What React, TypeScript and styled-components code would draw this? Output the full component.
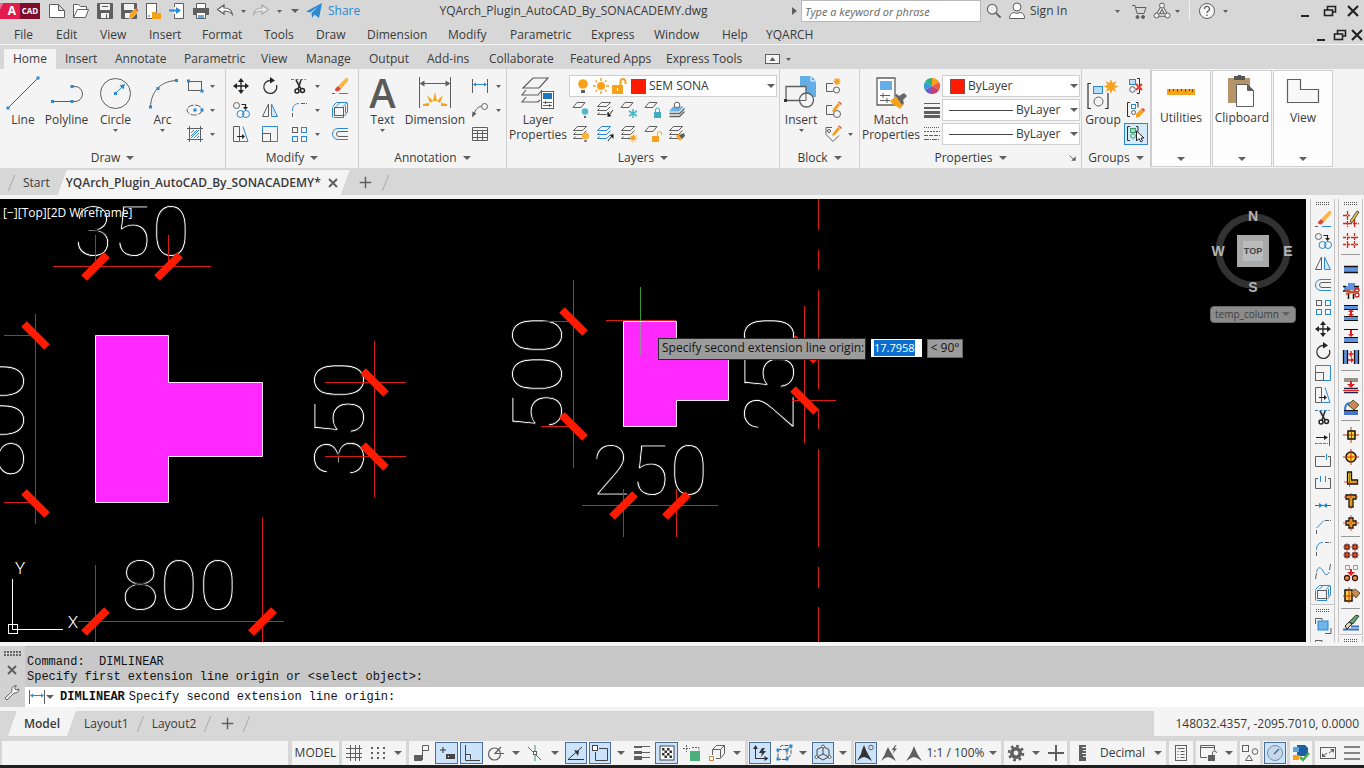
import React from 'react';
import styled, { createGlobalStyle, css } from 'styled-components';

const C = {
  chrome: '#d7d7d7',
  light: '#f4f4f4',
  text: '#3a3a3a',
  gray: '#5f5f5f',
  blue: '#2b88d2',
  orange: '#f7a21b',
  red: '#ff1a00',
  magenta: '#ff28ff',
  line: '#cfcfcf',
};

const Global = createGlobalStyle`
  *, *::before, *::after { box-sizing: border-box; }
  body { margin: 0; background: ${C.chrome}; }
  body, button, input, select {
    font-family: "Open Sans", "Noto Sans", sans-serif;
    font-size: 12px;
    line-height: 16px;
    color: ${C.text};
  }
  button { border: 0; padding: 0; background: none; }
  svg { display: block; flex: none; }
`;

/* ---------- icons ---------- */

const G = C.gray;
const B = C.blue;
const O = C.orange;

const dot = (x: number, y: number) => <rect x={x - 1.5} y={y - 1.5} width="3" height="3" fill={B} stroke="none" />;
const sheet = (x: number, y: number, fill = 'none', stroke = G) => (
  <path d={`M${x + 4} ${y}h8l-4 5h-8z`} fill={fill} stroke={stroke} />
);
const stack = (fill = 'none', stroke = G) => (
  <>
    <path d="M5.500 1.500h9l-4 4h-9z" fill={fill} stroke={stroke} />
    <path d="M3.500 7.500l-2 2h9l4-4" stroke={stroke} />
    <path d="M3.500 11.500l-2 2h9l3-3" stroke={stroke} />
  </>
);
const pencil = (
  <>
    <path d="M9 8L14 2l2 2-5 6-3 1z" fill={O} stroke="none" />
    <path d="M14 1l3 3 1-1-2.500-2.500z" fill="#e0523f" stroke="none" />
  </>
);

const icons: Record<string, React.ReactNode> = {
  rect: (<><rect x="2.5" y="4.5" width="13" height="9" />{dot(2.5, 4)}{dot(16, 14)}</>),
  ellipse: (<><ellipse cx="8.500" cy="9" rx="7.500" ry="5" strokeDasharray="6 1.500" />{dot(9, 9)}{dot(16, 9)}</>),
  hatch: (
    <>
      <path d="M3.500 1v16M14.500 1v16M1 3.500h16M1 14.500h16" />
      <path d="M5 8l3-3M5 11l6-6M5 13l8-8M8 13l5-5M11 13l2-2" stroke={B} />
    </>
  ),
  move: (
    <>
      <path d="M9 3v12M3 9h12" stroke="#222" strokeWidth="1.300" />
      <path d="M9 1l3 4H6zM9 17l3-4H6zM1 9l4-3v6zM17 9l-4-3v6z" fill="#222" stroke="none" />
    </>
  ),
  rotate: (<><path d="M10 3.500H8.500A6.500 6.500 0 1 0 15.500 8" stroke="#333" strokeWidth="1.300" /><path d="M9 0l5 3.500-5 3z" fill="#222" stroke="none" /></>),
  trim: (
    <>
      <path d="M1 2.500h15" stroke={B} strokeDasharray="3 1.500" />
      <path d="M6 3l5 9M11 3l-3 9" stroke="#333" strokeWidth="1.600" />
      <circle cx="7" cy="14" r="2" stroke="#222" strokeWidth="1.500" />
      <circle cx="12.500" cy="13.500" r="2" stroke="#222" strokeWidth="1.500" />
    </>
  ),
  erase: (
    <>
      <path d="M7 9l8-8h2v3l-7 8z" fill="#f9b545" stroke="none" />
      <path d="M7 9l3 3-3 2.500-2.500-.5-.5-2z" fill="#d9483a" stroke="none" />
      <path d="M1 16.500h3" stroke={G} /><path d="M8 16.500h9" stroke={B} />
    </>
  ),
  copy: (
    <>
      <circle cx="4.500" cy="4.500" r="3" />
      <path d="M9.500 3.500h4v3" stroke="#222" strokeWidth="1.200" /><path d="M11 6h5l-2.500 3z" fill="#222" stroke="none" />
      <circle cx="8.500" cy="13" r="3.500" stroke={B} /><circle cx="14" cy="13" r="3.500" stroke={B} />
    </>
  ),
  mirror: (<><path d="M7.500 3v12.500h-6z" /><path d="M10.500 3v12.500h6z" stroke={B} fill="#d5e7f7" /></>),
  fillet: (<><path d="M2.500 10C2.500 5 5 2.500 9 2.500" stroke={B} /><path d="M11 2.500h6M2.500 12v5" strokeDasharray="4 1" /></>),
  chamfer: (<><path d="M2.500 10L10 2.500" stroke={B} /><path d="M11 2.500h6M2.500 12v5" strokeDasharray="4 1" /></>),
  box: (
    <>
      <path d="M1.500 16.500v-10M12.500 6.500v10M3 16.500h10" stroke={B} /><rect x="3.500" y="6.500" width="9" height="8" />
      <path d="M1.500 5.500l4-4h5M5 5.500l4-4h7l-4 4M16.500 2v9l-3 4M14.500 5v7" stroke={B} />
    </>
  ),
  stretch: (
    <>
      <path d="M1.500 1.500h6v15h-6z" /><path d="M11 1.500l5 15H8" stroke={B} />
      <path d="M5 11.500h6" stroke="#222" /><path d="M10 9l3 2.500-3 2.500z" fill="#222" stroke="none" />
    </>
  ),
  scale: (<><path d="M1.500 8V1.500h15v15H10" stroke={B} /><rect x="1.500" y="8.500" width="8" height="8" /></>),
  array: (
    <>
      <rect x="2.500" y="2.500" width="5" height="5" /><rect x="11.500" y="2.500" width="5" height="5" stroke={B} />
      <rect x="2.500" y="11.500" width="5" height="5" stroke={B} /><rect x="11.500" y="11.500" width="5" height="5" stroke={B} />
    </>
  ),
  offset: (<><path d="M17 3.500H7a5.500 5.500 0 0 0 0 11h10" stroke={B} /><path d="M17 6.500H8a2.500 2.500 0 0 0 0 5h9" /></>),
  extend: (<><path d="M2 7.500h9" stroke="#222" /><path d="M10 5l4 2.500-4 2.500z" fill="#222" stroke="none" /><path d="M15.500 3v13" /><path d="M1 13.500h13" stroke={B} strokeDasharray="3 1" /></>),
  breakAt: (<><path d="M11 4.500H1.500v10h15v-10H14" /><path d="M12.500 2v6" stroke={B} /></>),
  breakIt: (<><path d="M4 4.500H1.500v10h15v-10H14" /><path d="M6.500 2v6M11.500 2v6" stroke={B} /></>),
  join: (<><path d="M1 9.500h16" /><path d="M5 7l4 2.500-4 2.500zM13 7L9 9.500l4 2.500z" fill={B} stroke="none" /></>),
  blend: (<><path d="M1.500 17l1-6M15.500 8l1-6" /><path d="M2.500 10C4 4 7 5 9 9s4 5 6.500 1" stroke={B} /></>),
  order: (<><path d="M1.500 7V1.500H8v2" /><path d="M11 16.500h6V11" /><rect x="4" y="4" width="10" height="9" fill="#6db3ec" stroke={B} /></>),
  dim: (<><path d="M1.500 2v14M16.500 2v14" /><path d="M3 7.500h12" stroke={B} /><path d="M2 7.500l3-2v4zM16 7.500l-3-2v4z" fill={B} stroke="none" /></>),
  leader: (<><circle cx="13.500" cy="5.500" r="3" /><path d="M10.500 5.500C7 5.500 5 8 2 14" /><path d="M1 16.500l.5-6 4 2z" fill={G} stroke="none" /></>),
  table: (<path d="M1.500 2.500h15v13h-15zM1.500 5.500h15M1.500 8.500h15M1.500 12.500h15M6.500 5.500v10M11.500 5.500v10" />),
  layOff: (<>{sheet(1, 1.5)}<circle cx="13" cy="10.500" r="3.300" fill="#57b7c6" stroke="none" /><path d="M12 15h2v2h-2z" fill={G} stroke="none" /></>),
  layIso: (<>{stack()}<path d="M17 9l-4 5" stroke="#222" /><path d="M11.500 16v-5l4 4z" fill="#222" stroke="none" /></>),
  layFreeze: (<>{sheet(1, 1.5)}<path d="M13 8v9M9 10l8 5M17 10l-8 5" stroke="#46b4c7" strokeWidth="1.500" /></>),
  layLock: (<>{sheet(1, 1.5)}<rect x="10" y="11" width="7" height="6" fill="#46aabf" stroke="none" /><path d="M11.500 11V9a2 2 0 0 1 4 0v2" stroke="#46aabf" /></>),
  layCur: (<><path d="M5 5.500h11l-5 5H1z" fill="#6bb0e6" stroke="none" /><path d="M1.500 12.500h10l5-5M1.500 15.500h10l5-5" strokeWidth="1.300" /><circle cx="9" cy="4" r="2.800" fill="#fff" /></>),
  layOn: (<>{stack()}<circle cx="13.500" cy="11" r="3.600" fill="#fbb438" stroke="none" /><path d="M12.500 15h2v2h-2z" fill={G} stroke="none" /></>),
  layUniso: (<>{stack('none', B)}<path d="M12 16l4-5" stroke="#222" /><path d="M17.500 9v5l-4-4z" fill="#222" stroke="none" /></>),
  layThaw: (<>{stack()}<circle cx="13" cy="13" r="2.500" fill={O} stroke="none" /><circle cx="13" cy="13" r="4" stroke={O} strokeDasharray="1.200 1.900" /></>),
  layUnlock: (<>{sheet(1, 1.5)}<rect x="8" y="11" width="7" height="6" fill={O} stroke="none" /><path d="M13.500 11V8.500a2 2 0 0 1 4 0V10" stroke={O} /></>),
  layMatch: (<>{stack()}<path d="M8 11l3-2 3 4-2 3c-1-2-3-3-4-5z" fill={O} stroke="none" /><path d="M11 10l5-2 1 3-3 3z" fill={G} stroke="none" /></>),
  blkNew: (<><path d="M9 6.500H2.500v8H9" /><circle cx="12.500" cy="13" r="3" /><path d="M13 1v7M9.500 4.500h7M10.500 2l5 5M15.500 2l-5 5" stroke={O} strokeWidth="1.500" /></>),
  blkEdit: (<><path d="M8 4.500H2.500v9H9" /><circle cx="13" cy="13" r="3.500" />{pencil}</>),
  blkAttr: (<><path d="M8 2.500H2v7l7 7 6-6" /><circle cx="5" cy="6" r="1.500" />{pencil}</>),
  lw: (<path d="M1 2h16v1H1zM1 6h16v2H1zM1 10h16v3H1zM1 14h16v3H1z" fill={G} stroke="none" />),
  lt: (<><path d="M1 2.500h16" strokeDasharray="1 1" /><path d="M1 6.500h16" strokeDasharray="2 1" /><path d="M1 10.500h16" strokeDasharray="4 1" /><path d="M1 14.500h16" strokeDasharray="5 1 1 1" /></>),
  ungroup: (<><rect x="2.500" y="2.500" width="6" height="5" stroke={B} fill="#bfe0f7" /><circle cx="5.500" cy="12.500" r="2.800" /><path d="M10 1.500h2.500v15H10" stroke="#333" /><path d="M9 7l6 6M15 7l-6 6" stroke="#e23c2e" strokeWidth="1.800" /></>),
  grpEdit: (<><path d="M3 1.500H.5v14H3M9 1.500h2v5" stroke="#333" /><rect x="4.500" y="3.500" width="4" height="4" stroke={B} /><circle cx="6.500" cy="11.500" r="2" /><path d="M9 13l5-5 3 3-5 5-3 .5z" fill={O} stroke="none" /><path d="M14 8l2-1 2 2-1 2z" fill="#e0523f" stroke="none" /></>),
  grpSel: (<><path d="M3 1.500H.5v14H3M9 1.500h2v5" stroke="#333" /><rect x="3.500" y="3.500" width="5" height="4" stroke="#3a9a68" fill="#9fd8b4" /><circle cx="6" cy="11" r="2.300" stroke="#3a9a68" /><path d="M9.500 6v10l2.500-2.500 2 3.500 1.500-1-1.500-3h3z" fill="#fff" stroke="#222" /></>),
  // status bar
  grid: (<path d="M5.500 1v16M10.500 1v16M14.500 1v16M1 4.500h16M1 9.500h16M1 13.500h16" />),
  snap: (<path d="M2 3h2v2H2zM8 3h2v2H8zM14 3h2v2h-2zM2 8h2v2H2zM8 8h2v2H8zM14 8h2v2h-2zM2 13h2v2H2zM8 13h2v2H8zM14 13h2v2h-2z" fill={G} stroke="none" />),
  infer: (<><rect x="1" y="11" width="8" height="6" fill={G} stroke="none" /><path d="M9.500 16V1.500h6v5h-6" /></>),
  dyn: (<><path d="M5 3v6M2 6h6" stroke="#333" /><rect x="8" y="10" width="9" height="5" fill="#444" stroke="none" /><path d="M10 12.500h1" stroke="#fff" /></>),
  ortho: (<path d="M2.500 1v15.500H17M2.500 10.500h5v5" stroke="#444" />),
  polar: (<><circle cx="7.500" cy="10" r="6" strokeWidth="1.200" /><path d="M7.500 9.500H17M7.500 10L14 3" strokeWidth="1.200" /></>),
  iso: (<><path d="M2 3l13 13" stroke="#d33" /><path d="M9 1v16" stroke="#3a9a68" /><rect x="7.500" y="7.500" width="3" height="3" fill="#fff" /></>),
  track: (<><path d="M1 15.500h16M1 15.500L15 3" stroke="#333" /><path d="M7 6l5 1-1 5z" fill="#333" stroke="none" /></>),
  osnap: (<><path d="M8 4.500h8.500v12h-12V8" stroke="#444" /><rect x="1.500" y="1.500" width="5" height="5" stroke="#444" fill="#fff" /></>),
  weight: (<path d="M1 2h8v2H1zM9 2h8v1H9zM1 7h8v3H1zM9 8h8v1H9zM1 12h8v4H1zM9 13h8v1H9z" fill={G} stroke="none" />),
  trans: (<><rect x="2" y="2" width="14" height="14" fill="#fff" stroke="#444" /><path d="M4 4h2.500v2.500H4zM9 4h2.500v2.500H9zM6.500 6.500H9V9H6.500zM11.500 6.500H14V9h-2.500zM4 9h2.500v2.500H4zM9 9h2.500v2.500H9zM6.500 11.500H9V14H6.500zM11.500 11.500H14V14h-2.500z" fill="#333" stroke="none" /></>),
  cycle: (<><path d="M3.500 1v7M0 4.500h7M9 3.500h7v3" strokeDasharray="2 1" /><rect x="7" y="7" width="10" height="10" fill="#4bb07a" stroke="none" /></>),
  osnap3: (<><path d="M4.500 11V5.500l4-4h8v8l-4 5H8M4.500 5.500h8v8M12.500 5.500l4-4" /><rect x="1.500" y="12.500" width="4" height="4" stroke="#e08a3c" fill="#fff" /></>),
  ucs: (<><path d="M4.500 14V4M4 14.500h10" stroke="#333" /><path d="M4.500 1l2.500 4H2zM17.500 14.500l-4-2.500v5zM11 4l-3 5h3l-1 4 5-6h-3l2-3z" fill="#333" stroke="none" /></>),
  filter: (<><path d="M3 5.500h9v10H3zM12 5.500l4-4v9l-4 5M5 3l2-1.500h8" strokeDasharray="4 1" />{dot(3, 6)}{dot(12, 6)}{dot(3, 15)}{dot(12, 15)}{dot(16, 2)}</>),
  gizmo: (<><path d="M9 2.500l6 3v7l-6 3.500-6-3.500v-7zM9 3v7l-6 3M9 10l6 3" stroke="#444" /><circle cx="9" cy="2.500" r="1.500" fill="#fff" /><circle cx="2.500" cy="13" r="1.500" fill="#fff" /><circle cx="15.500" cy="13" r="1.500" fill="#fff" /></>),
  annVis: (<><path d="M7 1l2 5 2 4 4 7-5-3-3-1-3 1-4 3 4-7 1-4z" fill="#333" stroke="none" /><circle cx="14" cy="3.500" r="2.300" stroke={G} /></>),
  annAuto: (<><path d="M7 3l2 4 2 3 4 7-5-3-3-1-3 1-4 3 4-7 1-3z" fill={G} stroke="none" /><path d="M14.500 1l-4 5h2.500l-1.500 4L16 4.500h-2.500L15.500 1z" fill={G} stroke="none" /></>),
  ann: (<path d="M9 2l2 5 2 4 4 6-5-3-3-1-3 1-5 3 4-6 2-4z" fill={G} stroke="none" />),
  gear: (<><circle cx="9" cy="9" r="4.200" strokeWidth="3.600" /><circle cx="9" cy="9" r="7" strokeWidth="2.600" strokeDasharray="2.700 2.800" /></>),
  plus: (<path d="M9 1v16M1 9h16" strokeWidth="2" />),
  ruler: (<><path d="M5 1h7v16H5z" fill={G} stroke="none" /><path d="M8 3.500h4M9 6.500h3M8 9.500h4M9 12.500h3" stroke="#eee" /></>),
  quick: (<><rect x="3.500" y="1.500" width="11" height="15" /><path d="M5.500 4.500h7M8.500 7.500h4M8.500 10.500h4M8.500 13.500h4M5.500 7.500h1M5.500 10.500h1M5.500 13.500h1" /></>),
  lockUi: (<><path d="M8 13.500H1.500v-12h14v5" /><path d="M1.500 3.500h14" /><rect x="9" y="11" width="7" height="6" fill={G} stroke="none" /><path d="M13.500 11V9a2 2 0 0 1 4 0" /></>),
  isolate: (<><rect x="1.500" y="1.500" width="6" height="6" /><circle cx="14" cy="7.500" r="2.800" /><path d="M8 11l3.500 5.500h-7z" /></>),
  perf: (<><circle cx="9" cy="9" r="7.500" fill="#c5d9ea" stroke="#7690a8" /><path d="M8 10l5-5" stroke="#4a6c8a" strokeWidth="1.500" /></>),
  trusted: (<><path d="M5 1h8l3 3v8H5z" fill="#1f5f9e" stroke="none" /><path d="M1 11h6v5H1z" fill={O} stroke="none" /><path d="M1 3h6v5H1z" fill="#58a2dd" stroke="none" /><path d="M8 13l3 3 6-7" stroke="#4caf50" strokeWidth="2.500" /></>),
  clean: (<><rect x="1.500" y="3.500" width="15" height="11" /><path d="M10 9l4-3M4 12l4-3" /><path d="M11 5h4v4zM3 9v4h4z" fill={G} stroke="none" /></>),
  menu: (<path d="M1 3h16M1 9h16M1 15h16" strokeWidth="1.600" />),
  wrench: (<path d="M2 15L9 8.500C8 5 10 2.500 13.500 2.500L11.500 5l1.500 2 3-1c0 3-2.500 4.500-5 4L4 17z" fill="#f4f4f4" />),
  close: (<path d="M5 5l8 8M13 5l-8 8" strokeWidth="2" />),
  // quick access bar
  fileNew: (<path d="M1.500 2.500h9l6 6v7h-15zM10.500 2.500v6h6" fill="#fff" />),
  fileOpen: (<path d="M1.500 15.500v-13h5l2 2h6v3M1.500 15.500l4-8h11l-3 8z" fill="#fff" />),
  save: (<><path d="M1.500 1.500h15v15h-15z" fill={G} /><path d="M4 2h10v6H4zM5 11h8v5H5z" fill="#f1f1f1" stroke="none" /><path d="M6 4.500h6M10.500 12v4" /></>),
  saveAs: (<><path d="M1.500 1.500h15v15h-15z" fill={G} /><path d="M4 2h10v6H4zM5 11h5v5H5z" fill="#f1f1f1" stroke="none" /><path d="M9 13l6-6 3 3-6 6-3 .5z" fill={O} stroke="#fff" strokeWidth=".5" /><path d="M15 7l1.500-1 2 2-.5 2z" fill="#e0523f" stroke="none" /></>),
  mobileOpen: (<><rect x="2.500" y="1.500" width="10" height="15" fill="#fff" /><path d="M4 14h2" /><path d="M8 10h4l1 1h4v6H8z" fill={O} stroke="none" /></>),
  mobileSave: (<><path d="M6.500 5V1.500h9v15h-9V12" fill="#fff" /><path d="M1 8.500h8" stroke={B} strokeWidth="2" /><path d="M8 5l5 3.500L8 12z" fill={B} stroke="none" /></>),
  print: (<><path d="M4.500 6V1.500h9V6" fill="#fff" /><rect x="1" y="6" width="16" height="7" fill={G} stroke="none" /><path d="M4.500 10.500h9v6h-9z" fill="#fff" /><path d="M6 13h6v3H6z" fill="#62a9df" stroke="none" /></>),
  undo: (<path d="M1.500 7.500L8 3v3c5 0 8 2 8.500 6.500-2-2.500-5-3.500-8.500-3.500v3z" fill="#fff" strokeWidth="1.200" />),
  redo: (<path d="M16.500 7.500L10 3v3C5 6 2 8 1.500 12.500 3.500 10 6.500 9 10 9v3z" fill="#e8e8e8" stroke="#aaa" strokeWidth="1.200" />),
  plane: (<path d="M1 9.500L17 1l-3 15-4.500-3.500L7 16l-.5-5L14 4l-9 6.500z" fill={B} stroke="none" />),
  search: (<><circle cx="7" cy="7" r="5.500" fill="#eee" strokeWidth="1.200" /><path d="M11 11l5.500 5.500" strokeWidth="2" /></>),
  user: (<><circle cx="9" cy="5" r="4" fill="#fff" /><path d="M1.500 16.500c0-4 2-5.500 4.500-6 2 1 4 1 6 0 3 .5 4.500 2 4.500 6z" fill="#fff" /></>),
  cart: (<><path d="M2 3.500h3l2 8h7l2-6H6" /><circle cx="7.500" cy="15" r="1.500" fill={G} /><circle cx="13" cy="15" r="1.500" fill={G} /></>),
  hub: (<><path d="M9 5l4.500 8h-9z" strokeWidth="3.500" /><path d="M9 5l4.500 8h-9z" stroke="#eee" strokeWidth="1.500" /><circle cx="9" cy="3.500" r="2.500" fill="#eee" /><circle cx="3.500" cy="13.500" r="2.500" fill="#eee" /><circle cx="14.500" cy="13.500" r="2.500" fill="#eee" /></>),
  min: (<path d="M4 14h8" stroke="#222" strokeWidth="2" />),
  restore: (<><rect x="3.500" y="8" width="8" height="5.500" stroke="#222" strokeWidth="1.600" /><path d="M6.500 8V4.500h8V10h-3" stroke="#222" strokeWidth="1.600" /></>),
  exit: (<path d="M4 4l10 10M14 4L4 14" stroke="#222" strokeWidth="2.200" />),
  minimizeRibbon: (<><rect x="1.500" y="4.500" width="14" height="9" fill="#f4f4f4" /><path d="M8.500 7l3 4h-6z" fill={G} stroke="none" /></>),
  bulb: (<><circle cx="9" cy="7" r="4.800" fill={O} stroke="none" /><path d="M7 13h4v3H7z" fill={G} stroke="none" /></>),
  sun: (<><circle cx="9" cy="9" r="4" fill={O} stroke="none" /><path d="M9 1v3M9 14v3M1 9h3M14 9h3M3.500 3.500L5 5M13 13l1.500 1.500M14.500 3.500L13 5M5 13l-1.500 1.500" stroke={O} strokeWidth="1.500" /></>),
  unlock: (<><rect x="2" y="8" width="11" height="9" fill={O} stroke="none" /><path d="M10.500 8V4.500a2.500 2.500 0 0 1 5 0V7" stroke={O} strokeWidth="2" /><path d="M7.500 11v3" stroke="#fff" /></>),
  wheel: (
    <g stroke="none">
      <path d="M9 9V1a8 8 0 0 1 7 4z" fill="#f7a21b" /><path d="M9 9l7-4a8 8 0 0 1 0 8z" fill="#ef5b3c" />
      <path d="M9 9l7 4a8 8 0 0 1-7 4z" fill="#c2416f" /><path d="M9 9v8a8 8 0 0 1-7-4z" fill="#7a55c7" />
      <path d="M9 9l-7 4a8 8 0 0 1 0-8z" fill="#2f9ad6" /><path d="M9 9L2 5a8 8 0 0 1 7-4z" fill="#2fb183" />
    </g>
  ),
  launcher: (<><path d="M5 6l5 5" /><path d="M12 7v5H7z" fill={G} stroke="none" /></>),
  // architecture plugin toolbar
  pAxis: (<><path d="M5.500 1v16M12.500 9v8M1 5.500h7M1 13.500h16" stroke="#cc2b1d" strokeWidth="1.300" strokeDasharray="4 1" /><path d="M8 11l7-10 2 1-7 11z" fill="#e8bf4a" stroke="#333" strokeWidth=".8" /></>),
  pGrid: (<path d="M5.500 1v16M12.500 1v16M1 5.500h16M1 12.500h16" stroke="#cc2b1d" strokeWidth="1.300" strokeDasharray="3 1" />),
  pWall: (<><rect x="2" y="7" width="14" height="5" fill="#5f93e0" stroke="none" /><path d="M2 6.500h14M2 12.500h14" stroke="#111" strokeWidth="1.500" /></>),
  pCut: (<><path d="M2 4h4V1h7v3h4v4H2z" fill="#5f93e0" stroke="none" /><path d="M1 9h7M6.500 12v5M11.500 12v5M1 4.500h3M12 4.500h5" stroke="#111" strokeWidth="1.500" /><path d="M3 8l10 3M4 12l9-3" stroke="#c8502c" strokeWidth="2" /><circle cx="15" cy="13" r="2" stroke="#cc2b1d" strokeWidth="1.300" /><circle cx="15" cy="8" r="2" stroke="#cc2b1d" strokeWidth="1.300" /></>),
  pGap: (<><path d="M2 2h14v3H2zM2 13h14v3H2z" fill="#5f93e0" stroke="none" /><path d="M2 1.500h14M2 5.500h14M2 12.500h14M2 16.500h14" stroke="#111" /><path d="M9 6v6" stroke="#d22" strokeWidth="2" /><path d="M9 5l3 3H6zM9 13l3-3H6z" fill="#d22" stroke="none" /></>),
  pDown: (<><path d="M2 12h14v4H2z" fill="#5f93e0" stroke="none" /><path d="M2 3.500h14M2 11.500h14M2 16.500h14" stroke="#111" /><path d="M9 4v5" stroke="#d22" strokeWidth="2" /><path d="M9 11l3-3H6z" fill="#d22" stroke="none" /></>),
  pSide: (<><path d="M2 2h3v14H2zM13 2h3v14h-3z" fill="#5f93e0" stroke="none" /><path d="M1.500 2v14M5.500 2v14M12.500 2v14M16.500 2v14" stroke="#111" strokeWidth="1.300" /><path d="M9 3v6M6.500 6h5M6 12h4" stroke="#d22" strokeWidth="1.500" /><path d="M9 9v6l3-3z" fill="#d22" stroke="none" /></>),
  pTop: (<><path d="M2 2h14v4H2z" fill="#999385" stroke="none" /><path d="M2 12.500h14M2 16.500h14" stroke="#224" strokeWidth="1.500" /><path d="M1 14.500h16" stroke="#d22" /><path d="M9 5v4" stroke="#d22" strokeWidth="2" /><path d="M9 12l4-4H5z" fill="#d22" stroke="none" /></>),
  pPaint: (<><path d="M2 13h14v4H2z" fill="#4476cc" stroke="none" /><path d="M2 12.500h14" stroke="#111" /><path d="M6 7l5-5 6 5-5 5z" fill="#c98a54" stroke="#553" /><path d="M3 12c0-5 2-7 5-7" stroke="#3b7be0" strokeWidth="2" /></>),
  pColRect: (<><path d="M9 1v16M1 9h16" stroke="#cc2b1d" /><rect x="6" y="5" width="7" height="8" fill="#ffd52e" stroke="#111" strokeWidth="1.500" /><path d="M9.500 6v6M7 9h5" stroke="#cc2b1d" /></>),
  pColCircle: (<><circle cx="9" cy="9" r="5" fill="#ffd52e" stroke="#111" strokeWidth="1.500" /><path d="M9 1v16M1 9h16" stroke="#cc2b1d" /></>),
  pL: (<><path d="M5.500 2h4v8h6v4h-10z" fill="#ffd52e" stroke="#111" strokeWidth="1.300" /><path d="M7.500 1v16M2 12h14" stroke="#cc2b1d" strokeWidth=".8" /></>),
  pT: (<><path d="M4 3h10v4h-3v8H7V7H4z" fill="#ffd52e" stroke="#111" strokeWidth="1.300" /><path d="M9 1v16M2 5h14" stroke="#cc2b1d" strokeWidth=".8" /></>),
  pPlus: (<><path d="M7 4h4v3h3v4h-3v3H7v-3H4V7h3z" fill="#ffd52e" stroke="#111" strokeWidth="1.300" /><path d="M9 1v16M1 9h16" stroke="#cc2b1d" strokeWidth=".8" /></>),
  pFour: (<><g fill="#f0a040" stroke="#411" strokeWidth="1.300"><rect x="3" y="3" width="4" height="4" /><rect x="11" y="3" width="4" height="4" /><rect x="3" y="11" width="4" height="4" /><rect x="11" y="11" width="4" height="4" /></g><path d="M5 1v16M13 1v16M1 5h16M1 13h16" stroke="#cc2b1d" strokeWidth=".8" /></>),
  pSwap: (<><path d="M3.500 1.500h4v4h-4zM11.500 1.500h4v4h-4z" stroke="#999" /><g fill="#f0a040" stroke="#411" strokeWidth="1.300"><circle cx="5" cy="14" r="2.500" /><circle cx="13" cy="14" r="2.500" /></g><path d="M9 5v3" stroke="#d22" strokeWidth="2" /><path d="M9 12l4-4H5z" fill="#d22" stroke="none" /></>),
  pFill: (<><path d="M3 4h7v11H3z" fill="#ffd52e" stroke="#111" strokeWidth="1.500" /><path d="M7 1v16M1 10h12" stroke="#cc2b1d" /><path d="M9 6l4-3 5 4-4 5z" fill="#c98a54" stroke="#553" /></>),
  pBrush: (<><path d="M1 15.500h16M9 12.500h8" stroke="#3b6fc6" strokeWidth="2" /><path d="M3 12l4-4 3 2-5 5z" fill="#e7d9b0" stroke="#222" /><path d="M7 8l7-7 3 1-6 8z" fill="#5fa36a" stroke="#222" strokeWidth=".8" /></>),
};

const Icon = ({ n, s = 18 }: { n: string; s?: number }) => (
  <svg width={s} height={s} viewBox="0 0 18 18" fill="none" stroke={G} aria-hidden="true">
    {icons[n]}
  </svg>
);

const big: Record<string, React.ReactNode> = {
  line: (<><path d="M2.500 31.500L31.500 2.500" />{dot(2, 32)}{dot(32, 2)}</>),
  polyline: (<><path d="M3 25.500h19M22 10.500h3a7.500 7.500 0 0 1 0 15h-3" />{dot(2.500, 25.500)}{dot(22, 25.500)}{dot(22, 10.500)}</>),
  circle: (<><circle cx="16.500" cy="17.500" r="15" /><path d="M16.500 17.500l7-7" stroke={B} /><path d="M26 8l-1.500 5.500-4-4z" fill={B} stroke="none" />{dot(16.5, 17.5)}</>),
  arc: (<><path d="M4.500 31C5 17 13 5.500 30 4.500" />{dot(4.5, 31)}{dot(12, 12.5)}{dot(30.5, 4.5)}</>),
  dimension: (
    <>
      <path d="M1.500 1v31M32.500 1v31" /><path d="M3 7.500h28" /><path d="M1.500 7.500l5-3v6zM32.500 7.500l-5-3v6z" fill={G} stroke="none" />
      <g fill={O} stroke="none">
        <path d="M17 16l2 9h-4zM9 19l6 6-3 2zM25 19l-3 8-3-2zM5 28l6-1v3H5zM29 28l-6-1v3h6z" />
      </g>
    </>
  ),
  layers: (
    <>
      <path d="M12 2h15l-9 10H2zM5 14l-4 5h16l4-5M5 21l-4 5h16l2-2" strokeWidth="1.200" />
      <rect x="20.500" y="15.500" width="12" height="17" fill="#fff" /><rect x="22" y="17" width="9" height="6" fill="#1d77bd" stroke="none" />
      <path d="M22 26.500h9M22 29.500h9M24.500 25v3M28.500 28v3" />
    </>
  ),
  insert: (
    <>
      <path d="M16 0h11l5 5v16H16z" fill="#64aee8" stroke="none" /><path d="M27 0v5h5" stroke="#fff" fill="#64aee8" />
      <path d="M2 10.500h20v14H2z" fill="#f4f4f4" strokeWidth="1.300" /><circle cx="22.500" cy="24" r="7" fill="#f4f4f4" strokeWidth="1.300" />
      <path d="M22 17v7.500h-7" /><path d="M0 23h3v3H0z" fill="#333" stroke="none" />
    </>
  ),
  match: (
    <>
      <path d="M3 2h18v27H3z" fill="#fff" strokeWidth="1.300" /><rect x="6" y="5" width="12" height="9" fill="#64aee8" stroke="none" />
      <path d="M6 19.500h10M6 24.500h10M9 17v5M13 22v5" />
      <path d="M16 25l6-5 8 8-4 5c-3-3-8-4-10-8z" fill={O} stroke="none" /><path d="M21 19l2-1 2 2 5-3 3 3-4 4 1 3-2 2z" fill="#666" stroke="none" />
    </>
  ),
  group: (
    <>
      <path d="M5 7.500H2v25h3M19 32.500h3V17" stroke="#333" strokeWidth="1.200" /><rect x="7.500" y="10.500" width="9" height="7" fill="#b9dcf6" stroke={B} />
      <circle cx="12.500" cy="25.500" r="4.500" /><path d="M25 3l1.500 4 4-2-2 4 4 1.500-4 1.500 2 4-4-2-1.500 4-1.500-4-4 2 2-4-4-1.500 4-1.500-2-4 4 2z" fill={O} stroke="none" />
    </>
  ),
  utilities: (<><rect x="3" y="14" width="28" height="6" fill={O} stroke="none" /><path d="M5.500 14v3M9.500 14v2M13.500 14v3M17.500 14v2M21.500 14v3M25.500 14v2M28.500 14v3" stroke="#7a4e00" /></>),
  clipboard: (
    <>
      <path d="M3 3h22v25H3z" fill="#b5946a" stroke="none" /><path d="M9 1h4V0h3v1h4v4H9z" fill="#555" stroke="none" />
      <path d="M11.500 9.500h11l6 6v16h-17z" fill="#fff" /><path d="M22.500 9.500v6h6z" fill={G} />
    </>
  ),
  view: (<path d="M1.500 4.500h13v10h18v13h-31z" fill="#f8f8f8" strokeWidth="1.200" />),
};

const BigIcon = ({ n }: { n: string }) => (
  <svg width="34" height="34" viewBox="0 0 34 34" fill="none" stroke={G} aria-hidden="true">
    {big[n]}
  </svg>
);

const Caret = ({ s = 5 }: { s?: number }) => (
  <svg width={s} height={s > 5 ? 4 : 3} viewBox="0 0 10 6" preserveAspectRatio="none" aria-hidden="true">
    <path d="M0 0h10L5 6z" fill={G} />
  </svg>
);

/* ---------- page frame ---------- */

const Page = styled.div`
  display: flex;
  flex-direction: column;
  height: 100vh;
  overflow: hidden;
  border-bottom: 3px solid #1f1f1f;
`;

const Bar = styled.div<{ $h: number }>`
  display: flex;
  flex: none;
  align-items: center;
  height: ${(p) => p.$h}px;
`;

const MenuBar = styled(Bar)`
  padding: 3px 0 0 14px;
`;

const Cell = styled.button<{ $w: number }>`
  display: flex;
  flex: none;
  align-items: center;
  justify-content: center;
  height: 20px;
  width: ${(p) => p.$w}px;
`;

const LogoA = styled.div`
  width: 20px;
  height: 16px;
  background: linear-gradient(115deg, #f46a8c 0 12%, #e51a4c 12%);
  color: #fff;
  font-weight: 700;
  padding-left: 4px;
  text-align: center;
`;

const LogoCad = styled.div`
  width: 20px;
  height: 16px;
  margin-right: 5px;
  background: #7d0d2b;
  color: #fff;
  font-size: 8px;
  font-weight: 700;
  text-align: center;
`;

const ShareLink = styled.a`
  width: 54px;
  padding-left: 5px;
  color: ${C.blue};
  text-decoration: none;
`;

const DocTitle = styled.div`
  flex: 1;
  padding-left: 6px;
  text-align: center;
  white-space: nowrap;
`;

const Search = styled.input`
  flex: none;
  width: 180px;
  height: 22px;
  align-self: flex-start;
  margin: 0 3px 0 4px;
  padding: 0 3px;
  border: 1px solid #b9b9b9;
  background: #fff;
  font-size: 11px;
  &::placeholder { color: #666; font-style: italic; opacity: 1; }
`;

const SignIn = styled.button`
  display: flex;
  align-items: center;
  justify-content: space-between;
  width: 94px;
  padding-left: 4px;
`;

const Divider = styled.span`
  width: 1px;
  height: 20px;
  background: #f2f2f2;
`;

const Spacer = styled.span<{ $w: number }>`
  flex: none;
  width: ${(p) => p.$w}px;
`;

const MenuLink = styled.a<{ $w: number }>`
  flex: none;
  width: ${(p) => p.$w}px;
  color: ${C.text};
  text-decoration: none;
  white-space: nowrap;
`;

const Grow = styled.span`
  flex: 1;
`;

const RibbonTabs = styled.nav`
  display: flex;
  flex: none;
  align-items: flex-end;
  height: 25px;
  padding-left: 4px;
  border-top: 1px solid #f4f4f4;
`;

const RibbonTab = styled.button<{ $w: number; $on?: boolean }>`
  flex: none;
  width: ${(p) => p.$w}px;
  height: 20px;
  padding-left: 9px;
  text-align: left;
  white-space: nowrap;
  ${(p) => p.$on && css`background: ${C.light};`}
`;

/* ---------- ribbon ---------- */

const Ribbon = styled.section`
  display: flex;
  flex: none;
  height: 99px;
  background: ${C.light};
`;

const Panel = styled.div<{ $w: number }>`
  display: flex;
  flex-direction: column;
  flex: none;
  width: ${(p) => p.$w}px;
  border-right: 1px solid ${C.line};
`;

const PanelBody = styled.div`
  display: flex;
  flex: none;
  height: 79px;
`;

const PanelTitle = styled.div`
  position: relative;
  display: flex;
  flex: none;
  align-items: center;
  justify-content: center;
  gap: 6px;
  height: 20px;
`;

const Launcher = styled.button`
  position: absolute;
  right: 0;
  top: 2px;
`;

const BigButton = styled.button<{ $w: number }>`
  display: flex;
  flex-direction: column;
  align-items: center;
  flex: none;
  width: ${(p) => p.$w}px;
  padding-top: 7px;
  line-height: 15px;
  > span { margin: 2px 0; }
`;

const LetterA = styled.b`
  height: 34px;
  font-size: 40px;
  line-height: 34px;
  font-weight: 600;
  color: #5a5a5a;
`;

const Tools = styled.div<{ $cols: string; $top?: number }>`
  display: grid;
  flex: none;
  grid-template-columns: ${(p) => p.$cols};
  grid-auto-rows: 24px;
  padding-top: ${(p) => p.$top ?? 5}px;
`;

const Tool = styled.button<{ $on?: boolean }>`
  display: flex;
  align-items: center;
  justify-content: center;
  ${(p) => p.$on && css`
    height: 22px;
    align-self: center;
    background: #d3eafb;
    border: 1px solid ${C.blue};
  `}
`;

const Combos = styled.div`
  display: flex;
  flex-direction: column;
  gap: 2px;
  flex: 1;
  padding: 6px 1px 0 0;
`;

const Combo = styled.label`
  display: flex;
  align-items: center;
  height: 22px;
  padding: 0 1px 0 4px;
  border: 1px solid ${C.line};
  background: #fff;
  select {
    flex: 1;
    min-width: 0;
    appearance: none;
    border: 0;
    padding: 0 0 0 3px;
    background: transparent;
  }
  > svg:last-child { pointer-events: none; }
`;

const Swatch = styled.span`
  flex: none;
  width: 15px;
  height: 15px;
  margin: 0 0 0 3px;
  background: ${C.red};
  border: 1px solid #8a4a40;
`;

const Rule = styled.span`
  flex: none;
  width: 64px;
  height: 1px;
  margin-left: 2px;
  background: #444;
`;

const Collapsed = styled.button`
  display: flex;
  flex-direction: column;
  align-items: center;
  flex: none;
  width: 60px;
  margin: 1px 1px 1px 0;
  padding: 4px 0 5px;
  background: #fdfdfd;
  border: 1px solid ${C.line};
  > span { flex: 1; padding-top: 1px; }
`;

/* ---------- slanted document tabs ---------- */

const Slash = styled.span`
  display: inline-block;
  flex: none;
  width: 1px;
  height: 16px;
  margin: 0 11px;
  background: #a9a9a9;
  transform: skewX(-22deg);
`;

const PlainTab = styled.button`
  flex: none;
  height: 24px;
`;

const SlantTab = styled.button<{ $w: number }>`
  display: flex;
  align-items: center;
  justify-content: center;
  flex: none;
  gap: 3px;
  height: 100%;
  width: ${(p) => p.$w}px;
  font-weight: 600;
  background: ${C.light};
  clip-path: polygon(9px 0, 100% 0, calc(100% - 9px) 100%, 0 100%);
`;

const Strip = styled.div`
  display: flex;
  flex: none;
  align-items: center;
  height: 31px;
  padding-top: 2px;
  border-bottom: 4px solid ${C.light};
`;

/* ---------- model space ---------- */

const Work = styled.main`
  display: flex;
  flex: 1;
  min-height: 0;
  background: ${C.light};
`;

const Viewport = styled.section`
  position: relative;
  flex: 1;
  min-width: 0;
  overflow: hidden;
  background: #000;
`;

const ViewLabel = styled.div`
  position: absolute;
  left: 3px;
  top: 6px;
  color: #fff;
`;

const Dynamic = styled.div`
  position: absolute;
  left: 658px;
  top: 139px;
  display: flex;
  gap: 5px;
  color: #151515;
`;

const Hint = styled.label`
  width: 208px;
  height: 22px;
  padding: 1px 3px;
  border: 1px solid #2a2a2a;
  background: #9c9c9c;
  white-space: nowrap;
`;

const ValueBox = styled.div`
  width: 51px;
  height: 18px;
  margin-top: 1px;
  padding: 1px 7px 1px 3px;
  background: #fff;
  input {
    display: block;
    width: 41px;
    height: 16px;
    padding: 0;
    border: 0;
    background: #0a6fd0;
    color: #fff;
    font-size: 11px;
  }
`;

const Angle = styled.output`
  height: 19px;
  width: 36px;
  margin-top: 1px;
  text-align: center;
  border: 1px solid #666;
  background: #9c9c9c;
`;

const Compass = styled.div`
  position: absolute;
  right: 11px;
  top: 10px;
  width: 84px;
  display: flex;
  flex-direction: column;
  align-items: center;
`;

const UcsSelect = styled.button`
  display: flex;
  flex: none;
  align-items: center;
  justify-content: space-between;
  width: 86px;
  height: 17px;
  margin-top: 11px;
  padding: 0 5px 2px 4px;
  border: 1px solid #686868;
  border-radius: 4px;
  background: #8b8b8b;
  font-size: 10px;
  color: #3f3f3f;
`;

const ToolColumns = styled.aside`
  display: flex;
  flex: none;
  gap: 3px;
  width: 58px;
  padding: 0 1px 0 4px;
  overflow: hidden;
`;

const ToolColumn = styled.div`
  display: flex;
  flex-direction: column;
  gap: 1px;
  width: 25px;
`;

const Palette = styled.div`
  display: flex;
  flex-direction: column;
  flex: none;
  align-items: center;
  padding-top: 3px;
  border: 1px solid #c3c3c3;
  border-top: 0;
`;

const Grip = styled.span<{ $w: number }>`
  flex: none;
  width: ${(p) => p.$w}px;
  height: 6px;
  background:
    repeating-linear-gradient(90deg, #666 0 2px, transparent 2px 3px) 0 0 / 100% 2px no-repeat,
    repeating-linear-gradient(90deg, #666 0 2px, transparent 2px 3px) 0 3px / 100% 2px no-repeat;
`;

const DotGrip = styled(Grip)`
  background:
    repeating-linear-gradient(90deg, #555 0 1px, transparent 1px 2px) 0 0 / 100% 1px no-repeat,
    repeating-linear-gradient(90deg, #555 0 1px, transparent 1px 2px) 0 2px / 100% 1px no-repeat;
`;

const SideTool = styled.button`
  display: flex;
  align-items: center;
  justify-content: center;
  height: 22px;
  width: 23px;
`;

const SideRule = styled.hr`
  width: 19px;
  height: 1px;
  margin: 2px 0 3px;
  border: 0;
  background: #999;
`;

/* ---------- command line ---------- */

const Command = styled.section`
  display: flex;
  flex: none;
  height: 69px;
  padding: 4px 0;
  background: ${C.light};
  font-family: "Liberation Mono", monospace;
  color: #111;
`;

const CommandRail = styled.div`
  display: flex;
  flex-direction: column;
  align-items: center;
  gap: 4px;
  width: 25px;
  padding: 5px 1px 0 0;
  background: #d2d2d2;
`;

const CommandMain = styled.div`
  display: flex;
  flex-direction: column;
  flex: 1;
`;

const History = styled.pre`
  flex: 1;
  margin: 0;
  padding: 8px 2px 0;
  background: #c8c8c8;
  border-top: 1px solid #bdbdbd;
  font: inherit;
  line-height: 15px;
`;

const Prompt = styled.label`
  display: flex;
  align-items: center;
  height: 20px;
  padding-left: 3px;
  background: #fff;
  white-space: pre;
  b { margin: 0 4px 0 6px; }
  input { flex: 1; border: 0; background: none; outline: 0; font: inherit; }
`;

const Coords = styled.output`
  display: flex;
  align-items: center;
  justify-content: flex-end;
  width: 210px;
  height: 25px;
  padding-right: 5px;
  background: ${C.light};
`;

/* ---------- status bar ---------- */

const Status = styled.footer`
  display: flex;
  flex: none;
  gap: 3px;
  height: 24px;
  margin-top: 5px;
  padding-left: 2px;
`;

const StatusGroup = styled.div`
  display: flex;
  flex: none;
  align-items: center;
  background: ${C.light};
`;

const StatusFill = styled.div`
  flex: 1;
  margin-right: 1px;
  background: ${C.light};
`;

const StatusItem = styled.button<{ $w: number; $on?: boolean }>`
  display: flex;
  align-items: center;
  justify-content: center;
  flex: none;
  width: ${(p) => p.$w}px;
  height: 22px;
  white-space: nowrap;
  ${(p) => p.$on && css`
    width: ${p.$w - 2}px;
    margin: 0 1px;
    background: #cce4fb;
    border: 1px solid #4d6d96;
  `}
`;

/* ---------- data ---------- */

const menus: [string, number][] = [
  ['File', 42], ['Edit', 44], ['View', 49], ['Insert', 53], ['Format', 62], ['Tools', 52], ['Draw', 51],
  ['Dimension', 81], ['Modify', 62], ['Parametric', 81], ['Express', 63], ['Window', 68], ['Help', 44], ['YQARCH', 60],
];

const ribbonTabs: [string, number][] = [
  ['Home', 52], ['Insert', 50], ['Annotate', 69], ['Parametric', 77], ['View', 45], ['Manage', 63], ['Output', 58],
  ['Add-ins', 62], ['Collaborate', 81], ['Featured Apps', 96], ['Express Tools', 99],
];

const layerTools = ['layOff', 'layIso', 'layFreeze', 'layLock', 'layCur', '', 'layOn', 'layUniso', 'layThaw', 'layUnlock', 'layMatch'];

const sideA = ['erase', 'copy', 'mirror', 'offset', 'array', 'move', 'rotate', 'scale', 'stretch', 'trim', 'extend', 'breakAt', 'breakIt', 'join', 'chamfer', 'fillet', 'blend', 'box'];
const sideB = ['pAxis', 'pGrid', '-', 'pWall', 'pCut', 'pGap', 'pDown', 'pSide', '-', 'pTop', 'pPaint', '-', 'pColRect', 'pColCircle', 'pL', 'pT', 'pPlus', '-', 'pFour', 'pSwap', 'pFill', '-', 'pBrush'];

type StatusEntry = [string, number, boolean?];
const statusGroups: StatusEntry[][] = [
  [['MODEL', 47]],
  [['grid', 24], ['snap', 24], ['v', 16]],
  [['infer', 25], ['dyn', 25, true], ['ortho', 25, true], ['polar', 23], ['v', 17], ['iso', 22], ['v', 18], ['track', 24, true], ['osnap', 24, true], ['v', 17], ['weight', 25], ['trans', 25, true], ['cycle', 25], ['osnap3', 25], ['v', 16]],
  [['ucs', 24, true], ['filter', 23], ['v', 16], ['gizmo', 24, true], ['v', 16]],
  [['annVis', 24, true], ['annAuto', 24], ['ann', 24], ['1:1 / 100%', 59], ['v', 16]],
  [['gear', 23], ['v', 17], ['plus', 23]],
  [['ruler', 26], ['Decimal', 53], ['v', 17]],
  [['quick', 24]],
  [['lockUi', 24], ['v', 17]],
  [['isolate', 20]],
  [['perf', 24, true]],
  [['trusted', 22]],
  [['clean', 25], ['menu', 24]],
];

/* ---------- drawing ---------- */

const Slashes = ({ at, back }: { at: [number, number][]; back?: boolean }) => (
  <>
    {at.map(([x, y]) => (
      <path key={`${x}-${y}`} d={back ? `M${x - 11} ${y - 11}l23 23` : `M${x - 11} ${y + 12}l23 -23`} stroke={C.red} strokeWidth="8" />
    ))}
  </>
);

const DimText = styled.text`
  font-family: Roboto, "Open Sans", sans-serif;
  font-size: 71px;
  font-weight: 100;
  fill: #fff;
  stroke: #000;
  stroke-width: 0.8px;
  text-anchor: middle;
`;

const AxisText = styled.text`
  font-family: Roboto, sans-serif;
  font-size: 17px;
  font-weight: 300;
  fill: #fff;
  text-anchor: middle;
`;

const Drawing = () => (
  <svg width="100%" height="100%" fill="none">
    <g transform="translate(0 -199)">
      <DimText x="132" y="256">350</DimText>
      <DimText x="179" y="610">800</DimText>
      <DimText x="650" y="495">250</DimText>
      <DimText transform="translate(24 420) rotate(-90)">800</DimText>
      <DimText transform="translate(364 419) rotate(-90)">350</DimText>
      <DimText transform="translate(562 374) rotate(-90)">500</DimText>
      <DimText transform="translate(794 374) rotate(-90)">250</DimText>
      <g stroke="#d81e12" strokeWidth="1">
        <path d="M53 266.500h158M95.500 235v31M168.500 235v31" />
        <path d="M35.500 314v210M4 335.500h31M4 502.500h31" />
        <path d="M374.500 341v156M325 382.500h81M325 456.500h81" />
        <path d="M78 621.500h206M95.500 565v90M262.500 518v140" />
        <path d="M573.500 280v188M543 321.500h30M541 426.500h32" />
        <path d="M582 505.500h136M623.500 489v48M676.500 489v48" />
        <path d="M804.500 306v137M792 400.500h44M606 320.500h70" />
        <path d="M818.500 199v31M818.500 250v20M818.500 290v99M818.500 409v20M818.500 449v98M818.500 567v21M818.500 607v400" />
      </g>
      <g fill={C.magenta} stroke="#ffe6ff">
        <path d="M95.500 335.500h73v47h94v74h-94v46h-73z" />
        <path d="M623.500 321.500h53v27h52v52h-52v26h-53z" />
      </g>
      <Slashes at={[[95, 266], [168, 266], [95, 621], [262, 621], [623, 505], [676, 505]]} />
      <Slashes back at={[[35, 335], [35, 503], [374, 382], [374, 456], [573, 321], [573, 426], [804, 349], [804, 400]]} />
      <path d="M640.500 287v34" stroke="#2f9a33" />
      <path d="M640.500 322v33" stroke="#9a8a9a" />
      <g stroke="#fff">
        <path d="M12.500 579v50.500H63" />
        <rect x="8.500" y="624.500" width="9" height="9" />
      </g>
      <AxisText x="20" y="574">Y</AxisText>
      <AxisText x="73" y="628">X</AxisText>
    </g>
  </svg>
);

const CompassText = styled.text`
  font-family: "Liberation Sans", sans-serif;
  font-size: 14px;
  font-weight: 700;
  fill: #b4b4b4;
  text-anchor: middle;
`;

const CubeText = styled(CompassText)`
  font-size: 9px;
  fill: #444;
`;

const Rose = () => (
  <svg width="84" height="86" fill="none">
    <circle cx="42" cy="42" r="34" stroke="#323232" strokeWidth="7" />
    <rect x="26" y="26" width="32" height="32" fill="#a9a9a9" />
    <rect x="32" y="32" width="20" height="20" fill="#b9bbbd" />
    <CompassText x="42" y="12">N</CompassText>
    <CompassText x="42" y="83">S</CompassText>
    <CompassText x="7" y="47">W</CompassText>
    <CompassText x="77" y="47">E</CompassText>
    <CubeText x="42" y="45">TOP</CubeText>
  </svg>
);

/* ---------- pieces ---------- */

const Big = ({ n, w, label, more }: { n: string; w: number; label: React.ReactNode; more?: boolean }) => (
  <BigButton $w={w}>
    {n === 'A' ? <LetterA>A</LetterA> : <BigIcon n={n} />}
    <span>{label}</span>
    {more && <Caret />}
  </BigButton>
);

const ToolGrid = ({ cols, items, top }: { cols: string; items: string[]; top?: number }) => (
  <Tools $cols={cols} $top={top}>
    {items.map((n, i) =>
      n === '' ? <span key={i} /> : (
        <Tool key={i} $on={n === 'grpSel'} aria-label={n === 'v' ? 'More' : n}>
          {n === 'v' ? <Caret /> : <Icon n={n} />}
        </Tool>
      ),
    )}
  </Tools>
);

const Title = ({ children }: { children: React.ReactNode }) => (
  <PanelTitle>{children}<Caret s={8} /></PanelTitle>
);

const Side = ({ items }: { items: string[] }) => (
  <Palette>
    <DotGrip $w={13} />
    {items.map((n, i) => (n === '-' ? <SideRule key={i} /> : <SideTool key={i} aria-label={n}><Icon n={n} /></SideTool>))}
  </Palette>
);

export default function App() {
  return (
    <Page>
      <Global />
      <Bar as="header" $h={22}>
        <LogoA>A</LogoA>
        <LogoCad>CAD</LogoCad>
        {['fileNew', 'fileOpen', 'save', 'saveAs', 'mobileOpen', 'mobileSave', 'print', 'undo'].map((n) => (
          <Cell key={n} $w={24} aria-label={n}><Icon n={n} /></Cell>
        ))}
        <Cell $w={12} aria-label="Undo list"><Caret /></Cell>
        <Cell $w={24} aria-label="redo"><Icon n="redo" /></Cell>
        <Cell $w={12} aria-label="Redo list"><Caret /></Cell>
        <Cell $w={20} aria-label="Customize"><Caret s={8} /></Cell>
        <Icon n="plane" />
        <ShareLink href="#">Share</ShareLink>
        <DocTitle>YQArch_Plugin_AutoCAD_By_SONACADEMY.dwg</DocTitle>
        <Spacer $w={28} />
        <svg width="5" height="8"><path d="M0 0l5 4-5 4z" fill={G} /></svg>
        <Search aria-label="Search" placeholder="Type a keyword or phrase" />
        <Cell $w={20} aria-label="Search"><Icon n="search" s={16} /></Cell>
        <Spacer $w={4} />
        <Icon n="user" />
        <SignIn>Sign In<Caret /></SignIn>
        <Spacer $w={7} />
        <Cell $w={24} aria-label="Store"><Icon n="cart" /></Cell>
        <Cell $w={22} aria-label="Apps"><Icon n="hub" /></Cell>
        <Cell $w={8} aria-label="Apps list"><Caret /></Cell>
        <Spacer $w={8} />
        <Divider />
        <Spacer $w={8} />
        <Cell $w={18} aria-label="Help">
          <svg width="18" height="18" fill="none" stroke={G}>
            <circle cx="9" cy="9" r="7.500" fill="#f6f6f6" />
            <path d="M6.500 7a2.500 2.500 0 1 1 3.500 2.200c-.8.4-1 .8-1 1.800M9 12.500v1.500" strokeWidth="1.300" />
          </svg>
        </Cell>
        <Cell $w={18} aria-label="Help list"><Caret /></Cell>
        <Spacer $w={60} />
        <Cell $w={24} aria-label="Minimize"><Icon n="min" /></Cell>
        <Cell $w={24} aria-label="Restore"><Icon n="restore" /></Cell>
        <Cell $w={22} aria-label="Close"><Icon n="exit" /></Cell>
      </Bar>

      <MenuBar as="nav" $h={22}>
        {menus.map(([m, w]) => <MenuLink key={m} href="#" $w={w}>{m}</MenuLink>)}
        <Grow />
        <Cell $w={18} aria-label="Minimize drawing"><Icon n="min" /></Cell>
        <Cell $w={18} aria-label="Restore drawing"><Icon n="restore" /></Cell>
        <Cell $w={15} aria-label="Close drawing"><Icon n="exit" /></Cell>
      </MenuBar>

      <RibbonTabs>
        {ribbonTabs.map(([t, w]) => <RibbonTab key={t} $w={w} $on={t === 'Home'}>{t}</RibbonTab>)}
        <Cell $w={34} aria-label="Minimize ribbon"><Spacer $w={9} /><Icon n="minimizeRibbon" /><Spacer $w={4} /><Caret /></Cell>
      </RibbonTabs>

      <Ribbon>
        <Panel $w={226}>
          <PanelBody>
            <Big n="line" w={46} label="Line" />
            <Big n="polyline" w={41} label="Polyline" />
            <Big n="circle" w={57} label="Circle" more />
            <Big n="arc" w={37} label="Arc" more />
            <ToolGrid cols="27px 8px" items={['rect', 'v', 'ellipse', 'v', 'hatch', 'v']} />
          </PanelBody>
          <Title>Draw</Title>
        </Panel>
        <Panel $w={133}>
          <PanelBody>
            <ToolGrid cols="29px 29px 29px 8px 38px" items={['move', 'rotate', 'trim', 'v', 'erase', 'copy', 'mirror', 'fillet', 'v', 'box', 'stretch', 'scale', 'array', 'v', 'offset']} />
          </PanelBody>
          <Title>Modify</Title>
        </Panel>
        <Panel $w={148}>
          <PanelBody>
            <Big n="A" w={47} label="Text" more />
            <Big n="dimension" w={58} label="Dimension" />
            <ToolGrid cols="31px 6px" items={['dim', 'v', 'leader', 'v', 'table']} />
          </PanelBody>
          <Title>Annotation</Title>
        </Panel>
        <Panel $w={273}>
          <PanelBody>
            <Big n="layers" w={62} label={<>Layer<br />Properties</>} />
            <div>
              <Combos>
                <Combo>
                  <Icon n="bulb" /><Icon n="sun" /><Icon n="unlock" /><Swatch />
                  <select aria-label="Layer"><option>SEM SONA</option></select>
                  <Caret s={8} />
                </Combo>
              </Combos>
              <ToolGrid cols="24px 24px 24px 24px 24px 89px" top={1} items={layerTools} />
            </div>
          </PanelBody>
          <Title>Layers</Title>
        </Panel>
        <Panel $w={80}>
          <PanelBody>
            <Big n="insert" w={42} label="Insert" more />
            <ToolGrid cols="22px 12px" items={['blkNew', '', 'blkEdit', '', 'blkAttr', 'v']} />
          </PanelBody>
          <Title>Block</Title>
        </Panel>
        <Panel $w={222}>
          <PanelBody>
            <Big n="match" w={62} label={<>Match<br />Properties</>} />
            <ToolGrid cols="20px" items={['wheel', 'lw', 'lt']} />
            <Combos>
              <Combo><Swatch /><select aria-label="Color"><option>ByLayer</option></select><Caret s={8} /></Combo>
              <Combo><Rule /><select aria-label="Lineweight"><option>ByLayer</option></select><Caret s={8} /></Combo>
              <Combo><Rule /><select aria-label="Linetype"><option>ByLayer</option></select><Caret s={8} /></Combo>
            </Combos>
          </PanelBody>
          <PanelTitle>Properties<Caret s={8} /><Launcher aria-label="Properties palette"><Icon n="launcher" s={16} /></Launcher></PanelTitle>
        </Panel>
        <Panel $w={69}>
          <PanelBody>
            <Big n="group" w={42} label="Group" />
            <ToolGrid cols="24px" items={['ungroup', 'grpEdit', 'grpSel']} />
          </PanelBody>
          <Title>Groups</Title>
        </Panel>
        {[['utilities', 'Utilities'], ['clipboard', 'Clipboard'], ['view', 'View']].map(([n, t]) => (
          <Collapsed key={n}><BigIcon n={n} /><span>{t}</span><Caret s={8} /></Collapsed>
        ))}
      </Ribbon>

      <Strip>
        <Slash />
        <PlainTab>Start</PlainTab>
        <Spacer $w={8} />
        <SlantTab $w={292}>YQArch_Plugin_AutoCAD_By_SONACADEMY*<Icon n="close" s={18} /></SlantTab>
        <Spacer $w={8} />
        <Cell $w={16} aria-label="New tab"><Icon n="plus" s={13} /></Cell>
        <Slash />
      </Strip>

      <Work>
        <Viewport>
          <Drawing />
          <ViewLabel>[−][Top][2D Wireframe]</ViewLabel>
          <Dynamic>
            <Hint htmlFor="distance">Specify second extension line origin:</Hint>
            <ValueBox><input id="distance" defaultValue="17.7958" /></ValueBox>
            <Angle>&lt; 90°</Angle>
          </Dynamic>
          <Compass>
            <Rose />
            <UcsSelect>temp_column<Caret s={8} /></UcsSelect>
          </Compass>
        </Viewport>
        <ToolColumns>
          <ToolColumn><Side items={sideA} /><Side items={['order', 'order']} /></ToolColumn>
          <ToolColumn><Side items={sideB} /><Side items={['pGrid']} /></ToolColumn>
        </ToolColumns>
      </Work>

      <Command>
        <CommandRail>
          <Grip $w={17} />
          <Icon n="close" s={18} />
          <Icon n="wrench" s={18} />
        </CommandRail>
        <CommandMain>
          <History>{'Command:  DIMLINEAR\nSpecify first extension line origin or <select object>:'}</History>
          <Prompt>
            <Icon n="dim" /><Caret s={8} /><b>DIMLINEAR</b>Specify second extension line origin:
            <input aria-label="Command" />
          </Prompt>
        </CommandMain>
      </Command>

      <Bar $h={25}>
        <Spacer $w={8} />
        <SlantTab $w={68}>Model</SlantTab>
        <Spacer $w={8} />
        <PlainTab>Layout1</PlainTab>
        <Slash />
        <PlainTab>Layout2</PlainTab>
        <Slash />
        <Cell $w={16} aria-label="New layout"><Icon n="plus" s={13} /></Cell>
        <Slash />
        <Grow />
        <Coords>148032.4357, -2095.7010, 0.0000</Coords>
      </Bar>

      <Status>
        <StatusFill />
        {statusGroups.map((g, i) => (
          <StatusGroup key={i}>
            {g.map(([n, w, on], j) => (
              <StatusItem key={j} $w={w} $on={on} aria-label={n === 'v' ? 'Options' : n}>
                {n === 'v' ? <Caret s={8} /> : icons[n] ? <Icon n={n} /> : n}
              </StatusItem>
            ))}
          </StatusGroup>
        ))}
      </Status>
    </Page>
  );
}
